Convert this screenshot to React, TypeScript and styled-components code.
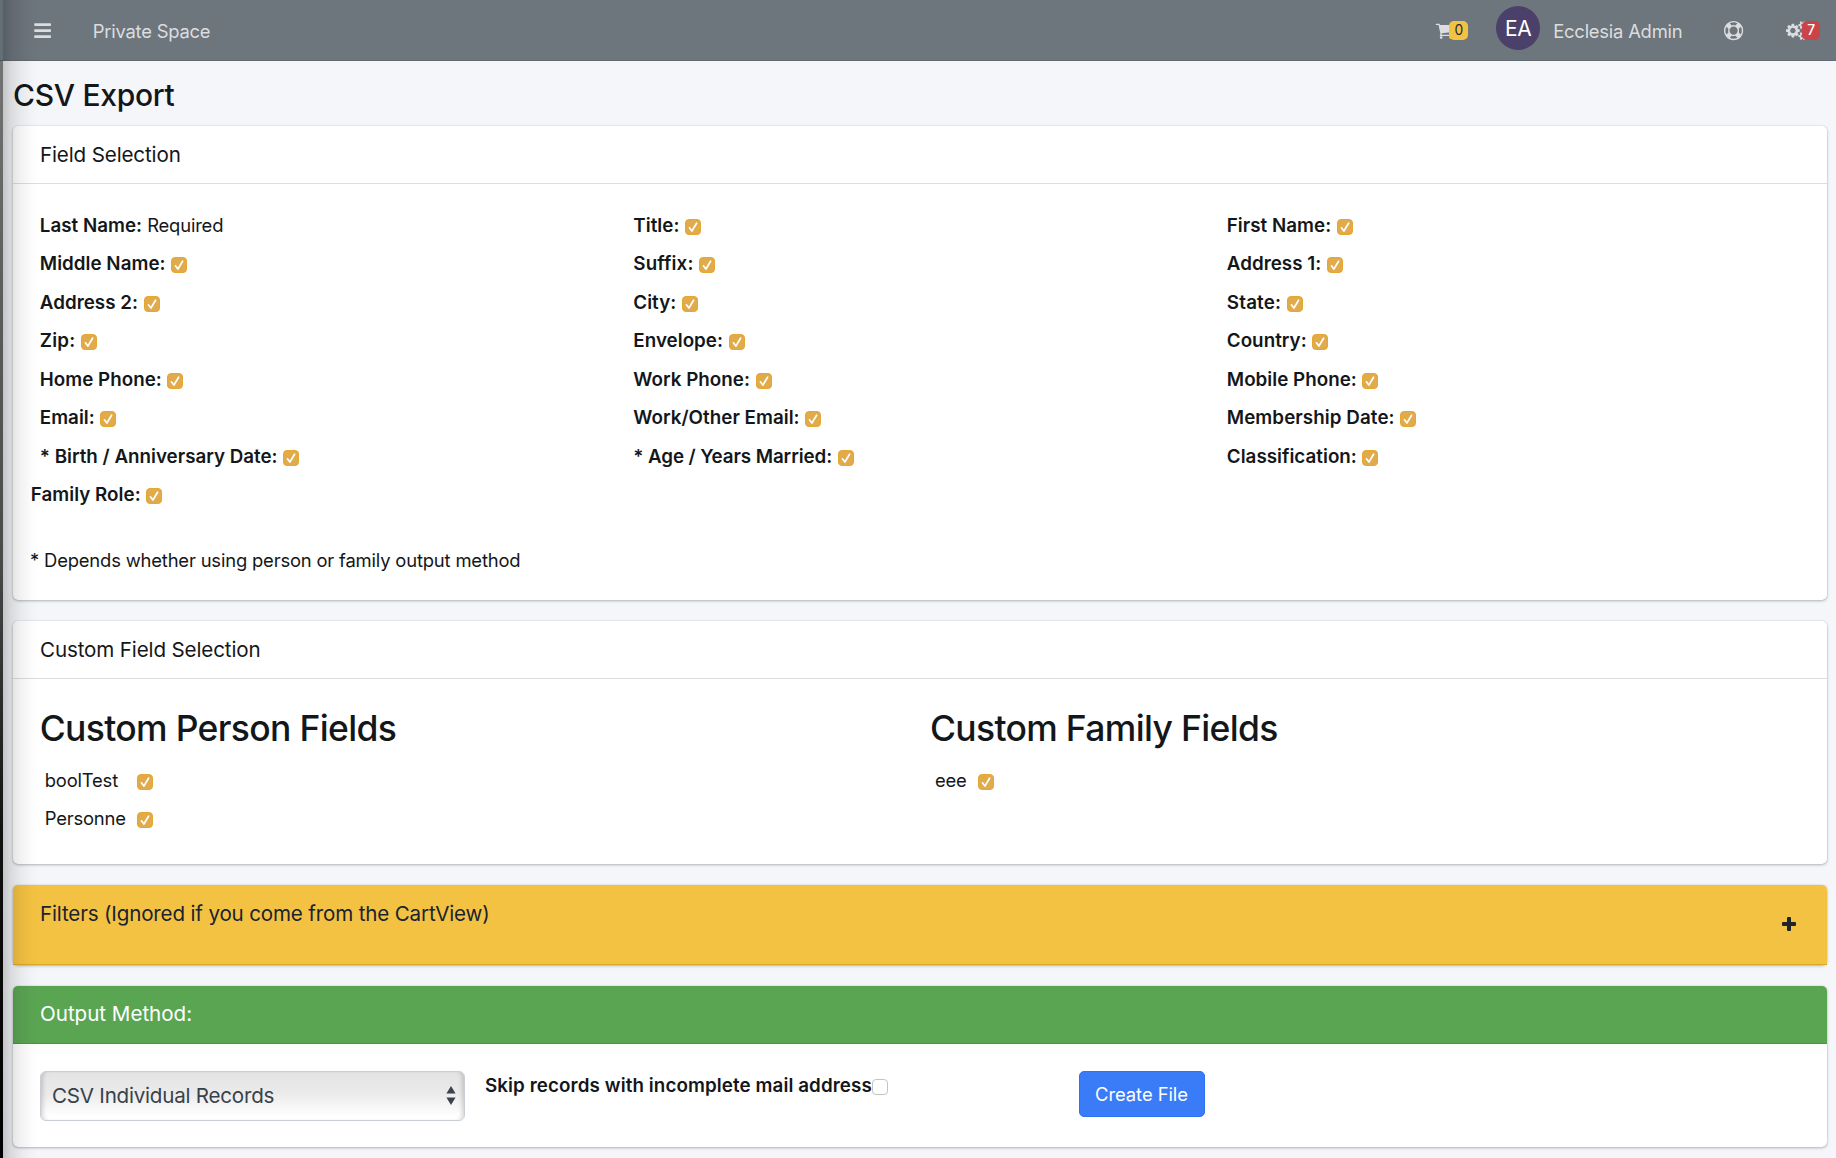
import React from 'react';
import styled, { createGlobalStyle } from 'styled-components';
import { FaBars } from 'react-icons/fa';

const GlobalStyle = createGlobalStyle`
  *, *::before, *::after { box-sizing: border-box; }
  body {
    margin: 0;
    background: #f4f6f9;
    color: #14171a;
    font-family: Inter, "Liberation Sans", sans-serif;
    font-size: 18.4px;
    letter-spacing: -0.17px;
    overflow: hidden;
  }
`;

const Page = styled.div`
  position: relative;
  display: grid;
  grid-template-columns: 3px 1fr;
  grid-template-rows: 61px 1fr;
  height: 1158px;
`;

const SidebarTop = styled.div`
  background: #646e77;
  border-bottom: 1px solid #4b545c;
`;

const SidebarEdge = styled.div`
  grid-row: 2;
  background: linear-gradient(180deg, #737373 0%, #5c5c5c 22%, #4a4a4a 45%, #111 70%, #000 100%);
`;

const SidebarShadow = styled.div`
  position: absolute;
  left: 3px;
  top: 0;
  bottom: 0;
  width: 36px;
  pointer-events: none;
  background: linear-gradient(90deg, rgba(0, 0, 0, 0.2) 0%, rgba(0, 0, 0, 0.115) 22%, rgba(0, 0, 0, 0.05) 50%, rgba(0, 0, 0, 0.015) 78%, transparent 100%);
`;

const Navbar = styled.header`
  display: flex;
  align-items: center;
  height: 61px;
  padding: 2px 16px 0 30px;
  background: #6d757d;
  border-bottom: 1px solid #626a72;
  color: #dbdddf;
`;

const NavLink = styled.a<{ $left?: number }>`
  display: flex;
  align-items: center;
  height: 38px;
  margin-left: ${(p) => p.$left ?? 0}px;
  line-height: 38px;
  letter-spacing: -0.22px;
  svg { display: block; flex: none; }
`;

const Spacer = styled.div`
  flex: 1;
`;

const Badge = styled.span<{ $tone: 'warning' | 'danger' }>`
  height: 19px;
  width: ${(p) => (p.$tone === 'warning' ? 19 : 18)}px;
  margin: 0 0 1px ${(p) => (p.$tone === 'warning' ? -5.2 : -6)}px;
  border-radius: 5px;
  background: ${(p) => (p.$tone === 'warning' ? '#f4c242' : '#cb444a')};
  color: ${(p) => (p.$tone === 'warning' ? '#1f2d3d' : '#fff')};
  font-size: 13.8px;
  font-weight: ${(p) => (p.$tone === 'warning' ? 400 : 500)};
  line-height: 18px;
  text-align: center;
  z-index: 1;
`;

const Avatar = styled.span`
  width: 44px;
  height: 44px;
  margin: 0 13px 6px 0;
  border-radius: 50%;
  background: #4b4069;
  color: #fff;
  font-size: 21px;
  line-height: 45px;
  text-align: center;
  letter-spacing: -0.3px;
`;

const Content = styled.main`
  padding: 16px 9px 0 10px;
`;

const PageTitle = styled.h1`
  margin: 0 0 13px;
  font-size: 30px;
  font-weight: 500;
  line-height: 36px;
  letter-spacing: -0.3px;
`;

const Card = styled.section<{ $height: number }>`
  height: ${(p) => p.$height}px;
  margin-bottom: 21px;
  border-radius: 5px;
  background: #fff;
  box-shadow: 0 0 1px rgba(0, 0, 0, 0.3), 0 1px 3px rgba(0, 0, 0, 0.26);
`;

const headTones = {
  plain: { bg: '#fff', line: '#dcdddd', text: '#14171a' },
  warning: { bg: '#f4c242', line: '#dba824', text: '#1a2330' },
  success: { bg: '#5aa552', line: '#4b9443', text: '#fff' },
};

const CardHead = styled.div<{ $tone: keyof typeof headTones; $height?: number; $track?: number }>`
  display: flex;
  justify-content: space-between;
  height: ${(p) => p.$height ?? 58}px;
  padding: 12.5px 31px 0 27px;
  border-bottom: 1px solid ${(p) => headTones[p.$tone].line};
  border-radius: 5px 5px 0 0;
  background: ${(p) => headTones[p.$tone].bg};
  color: ${(p) => headTones[p.$tone].text};
  font-size: 20.6px;
  line-height: 32px;
  letter-spacing: ${(p) => p.$track ?? -0.14}px;
`;

const CollapseIcon = styled.svg`
  width: 14px;
  height: 14px;
  margin-top: 19.5px;
  fill: #1f2429;
`;

const FieldGrid = styled.div`
  display: grid;
  grid-template-columns: repeat(3, 593.5px);
  grid-auto-rows: 38.5px;
  padding: 22.3px 0 0 17.8px;
`;

const Field = styled.div<{ $flush?: boolean }>`
  display: flex;
  padding-left: ${(p) => (p.$flush ? 0 : 9)}px;
  line-height: 38.5px;
`;

const Label = styled.label<{ $track?: number }>`
  padding-top: 0.5px;
  font-size: 18.8px;
  font-weight: 600;
  letter-spacing: ${(p) => p.$track ?? 0.02}px;
`;

const Required = styled.span`
  margin-left: 5px;
`;

const Note = styled.p`
  margin: 26.7px 0 0 17px;
  line-height: 38.5px;
`;

const Box = styled.span<{ $checked: boolean; $left: number; $top: number }>`
  display: block;
  flex: none;
  width: 16px;
  height: 16px;
  margin: ${(p) => p.$top}px 0 0 ${(p) => p.$left}px;
  border: 1px solid ${(p) => (p.$checked ? '#e5a72f' : '#c3c3c3')};
  border-radius: 4px;
  background: ${(p) => (p.$checked ? '#e1aa4a' : '#fff')};
  svg { display: block; }
`;

const Checkbox = ({ checked = true, left = 5.6, top = 12.4 }: { checked?: boolean; left?: number; top?: number }) => (
  <Box $checked={checked} $left={left} $top={top}>
    {checked && (
      <svg width="14" height="14" viewBox="0 0 14 14" fill="none">
        <path d="M3.4 7.8 5.9 11 10.6 3.2" stroke="#fff" strokeWidth="1.7" strokeLinecap="round" strokeLinejoin="round" />
      </svg>
    )}
  </Box>
);

const CustomColumns = styled.div`
  display: grid;
  grid-template-columns: 890.2px 1fr;
  padding: 28.5px 0 0 26.7px;
`;

const CustomTitle = styled.h2`
  margin: 0 0 11px;
  font-size: 35.5px;
  font-weight: 500;
  line-height: 42px;
  letter-spacing: -0.67px;
`;

const CustomTable = styled.div`
  display: grid;
  grid-template-columns: max-content max-content;
  grid-auto-rows: 38.5px;
  column-gap: 11px;
  padding-left: 5px;
  line-height: 38.5px;
`;

const OutputRow = styled.div`
  display: grid;
  grid-template-columns: 445px 593.5px 1fr;
  padding: 27px 0 0 27px;
`;

const Select = styled.div`
  display: flex;
  align-items: center;
  justify-content: space-between;
  width: 425px;
  height: 50px;
  padding: 0 8px 0 11px;
  border: 1px solid #c9ced4;
  border-radius: 6px;
  background: linear-gradient(180deg, #e3e3e3 0%, #ebebeb 45%, #fff 92%);
  box-shadow: inset 5px 0 4px -3px rgba(0, 0, 0, 0.16), inset -5px 0 4px -3px rgba(0, 0, 0, 0.16);
  color: #38414a;
  font-size: 20.6px;
  letter-spacing: -0.23px;
`;

const SkipLabel = styled.div`
  display: flex;
  line-height: 29px;
`;

const CreateButton = styled.button`
  width: 126px;
  height: 46px;
  padding: 0;
  border: 1px solid #2f72ee;
  border-radius: 5px;
  background: #3a7cf7;
  color: #fff;
  font-family: inherit;
  font-size: 18.4px;
  letter-spacing: -0.06px;
`;

const CartIcon = () => (
  <svg width="19.2" height="19.2" viewBox="0 0 1792 1792" fill="currentColor">
    <path d="M704 1536q0 52-38 90t-90 38-90-38-38-90 38-90 90-38 90 38 38 90zm896 0q0 52-38 90t-90 38-90-38-38-90 38-90 90-38 90 38 38 90zm128-1088v512q0 24-16.5 42.5t-40.5 21.5l-1044 122q13 60 13 70 0 16-24 64h920q26 0 45 19t19 45-19 45-45 19h-1024q-26 0-45-19t-19-45q0-11 8-31.5t16-36 21.5-40 15.5-29.5l-177-823h-204q-26 0-45-19t-19-45 19-45 45-19h256q16 0 28.5 6.5t19.5 15.5 13 24.5 8 26 5.5 29.5 4.5 26h1201q26 0 45 19t19 45z" />
  </svg>
);

const LifeRingIcon = () => (
  <svg width="19.2" height="19.2" viewBox="0 0 1792 1792" fill="currentColor">
    <path d="M896 0q182 0 348 71t286 191 191 286 71 348-71 348-191 286-286 191-348 71-348-71-286-191-191-286-71-348 71-348 191-286 286-191 348-71zm0 128q-190 0-361 90l194 194q82-28 167-28t167 28l194-194q-171-90-361-90zm-678 1129l194-194q-28-82-28-167t28-167l-194-194q-90 171-90 361t90 361zm678 407q190 0 361-90l-194-194q-82 28-167 28t-167-28l-194 194q171 90 361 90zm0-384q159 0 271.5-112.5t112.5-271.5-112.5-271.5-271.5-112.5-271.5 112.5-112.5 271.5 112.5 271.5 271.5 112.5zm484-217l194 194q90-171 90-361t-90-361l-194 194q28 82 28 167t-28 167z" />
  </svg>
);

const GearsIcon = () => (
  <svg width="22" height="19.2" viewBox="0 0 2048 1792" fill="currentColor">
    <path d="M896 896q0-106-75-181t-181-75-181 75-75 181 75 181 181 75 181-75 75-181zm768 512q0-52-38-90t-90-38-90 38-38 90q0 53 37.5 90.5t90.5 37.5 90.5-37.5 37.5-90.5zm0-1024q0-52-38-90t-90-38-90 38-38 90q0 53 37.5 90.5t90.5 37.5 90.5-37.5 37.5-90.5zm-384 421v185q0 10-7 19.5t-16 10.5l-155 24q-11 35-32 76 34 48 90 115 7 11 7 20 0 12-7 19-23 30-82.5 89.5t-78.5 59.5q-11 0-21-7l-115-90q-37 19-77 31-11 108-23 155-7 24-30 24h-186q-11 0-20-7.5t-10-17.5l-23-153q-34-10-75-31l-118 89q-7 7-20 7-11 0-21-8-144-133-144-160 0-9 7-19 10-14 41-53t47-61q-23-44-35-82l-152-24q-10-1-17-9.5t-7-19.5v-185q0-10 7-19.5t16-10.5l155-24q11-35 32-76-34-48-90-115-7-11-7-20 0-12 7-20 22-30 82-89t79-59q11 0 21 7l115 90q34-18 77-32 11-108 23-154 7-24 30-24h186q11 0 20 7.5t10 17.5l23 153q34 10 75 31l118-89q8-7 20-7 11 0 21 8 144 133 144 160 0 8-7 19-12 16-42 54t-45 60q23 48 34 82l152 23q10 2 17 10.5t7 19.5zm640 533v140q0 16-149 31-12 27-30 52 51 113 51 138 0 4-4 7-122 71-124 71-8 0-46-47t-52-68q-20 2-30 2t-30-2q-14 21-52 68t-46 47q-2 0-124-71-4-3-4-7 0-25 51-138-18-25-30-52-149-15-149-31v-140q0-16 149-31 13-29 30-52-51-113-51-138 0-4 4-7 4-2 35-20t59-34 30-16q8 0 46 46.5t52 67.5q20-2 30-2t30 2q51-71 92-112l6-2q4 0 124 70 4 3 4 7 0 25-51 138 17 23 30 52 149 15 149 31zm0-1024v140q0 16-149 31-12 27-30 52 51 113 51 138 0 4-4 7-122 71-124 71-8 0-46-47t-52-68q-20 2-30 2t-30-2q-14 21-52 68t-46 47q-2 0-124-71-4-3-4-7 0-25 51-138-18-25-30-52-149-15-149-31v-140q0-16 149-31 13-29 30-52-51-113-51-138 0-4 4-7 4-2 35-20t59-34 30-16q8 0 46 46.5t52 67.5q20-2 30-2t30 2q51-71 92-112l6-2q4 0 124 70 4 3 4 7 0 25-51 138 17 23 30 52 149 15 149 31z" />
  </svg>
);

const fields = [
  'Title:', 'First Name:', 'Middle Name:', 'Suffix:', 'Address 1:', 'Address 2:', 'City:', 'State:',
  'Zip:', 'Envelope:', 'Country:', 'Home Phone:', 'Work Phone:', 'Mobile Phone:', 'Email:',
  'Work/Other Email:', 'Membership Date:', '* Birth / Anniversary Date:', '* Age / Years Married:',
  'Classification:', 'Family Role:',
];

const labelTracking: Record<string, number> = {
  '* Age / Years Married:': -0.1,
  '* Birth / Anniversary Date:': -0.01,
  'Suffix:': 0.15,
  'State:': 0.2,
  'Zip:': 0.2,
  'Membership Date:': 0.07,
};

const customFields = [
  { title: 'Custom Person Fields', items: ['boolTest', 'Personne'] },
  { title: 'Custom Family Fields', items: ['eee'] },
];

export default function App() {
  return (
    <>
      <GlobalStyle />
      <Page>
        <SidebarTop />
        <Navbar>
          <NavLink><FaBars size={19.2} /></NavLink>
          <NavLink $left={40.5}>Private Space</NavLink>
          <Spacer />
          <NavLink>
            <CartIcon />
            <Badge $tone="warning">0</Badge>
          </NavLink>
          <NavLink $left={28}>
            <Avatar>EA</Avatar>
            Ecclesia Admin
          </NavLink>
          <NavLink $left={42}><LifeRingIcon /></NavLink>
          <NavLink $left={42.4}>
            <GearsIcon />
            <Badge $tone="danger">7</Badge>
          </NavLink>
        </Navbar>
        <SidebarEdge />
        <Content>
          <PageTitle>CSV Export</PageTitle>

          <Card $height={474}>
            <CardHead $tone="plain">Field Selection</CardHead>
            <FieldGrid>
              <Field>
                <Label>Last Name:</Label>
                <Required>Required</Required>
              </Field>
              {fields.map((name) => (
                <Field key={name} $flush={name === 'Family Role:'}>
                  <Label $track={labelTracking[name]}>{name}</Label>
                  <Checkbox />
                </Field>
              ))}
            </FieldGrid>
            <Note>* Depends whether using person or family output method</Note>
          </Card>

          <Card $height={243}>
            <CardHead $tone="plain">Custom Field Selection</CardHead>
            <CustomColumns>
              {customFields.map((group) => (
                <div key={group.title}>
                  <CustomTitle>{group.title}</CustomTitle>
                  <CustomTable>
                    {group.items.map((item) => (
                      <React.Fragment key={item}>
                        <span>{item}</span>
                        <Checkbox left={0} top={13} />
                      </React.Fragment>
                    ))}
                  </CustomTable>
                </div>
              ))}
            </CustomColumns>
          </Card>

          <Card $height={79.5}>
            <CardHead $tone="warning" $height={79.5} $track={-0.17}>
              Filters (Ignored if you come from the CartView)
              <CollapseIcon viewBox="0 0 14 14">
                <path d="M5 1a1 1 0 0 1 1-1h2a1 1 0 0 1 1 1v4h4a1 1 0 0 1 1 1v2a1 1 0 0 1-1 1H9v4a1 1 0 0 1-1 1H6a1 1 0 0 1-1-1V9H1a1 1 0 0 1-1-1V6a1 1 0 0 1 1-1h4z" />
              </CollapseIcon>
            </CardHead>
          </Card>

          <Card $height={161.5}>
            <CardHead $tone="success" $track={-0.02}>Output Method:</CardHead>
            <OutputRow>
              <Select>
                CSV Individual Records
                <svg width="10" height="19" viewBox="0 0 10 19" fill="#3b434b">
                  <path d="M5 0 9.6 7.6H.4zM5 19 .4 11.4h9.2z" />
                </svg>
              </Select>
              <SkipLabel>
                <Label $track={0.09}>Skip records with incomplete mail address</Label>
                <Checkbox checked={false} left={0} top={8} />
              </SkipLabel>
              <CreateButton>Create File</CreateButton>
            </OutputRow>
          </Card>
        </Content>
        <SidebarShadow />
      </Page>
    </>
  );
}
